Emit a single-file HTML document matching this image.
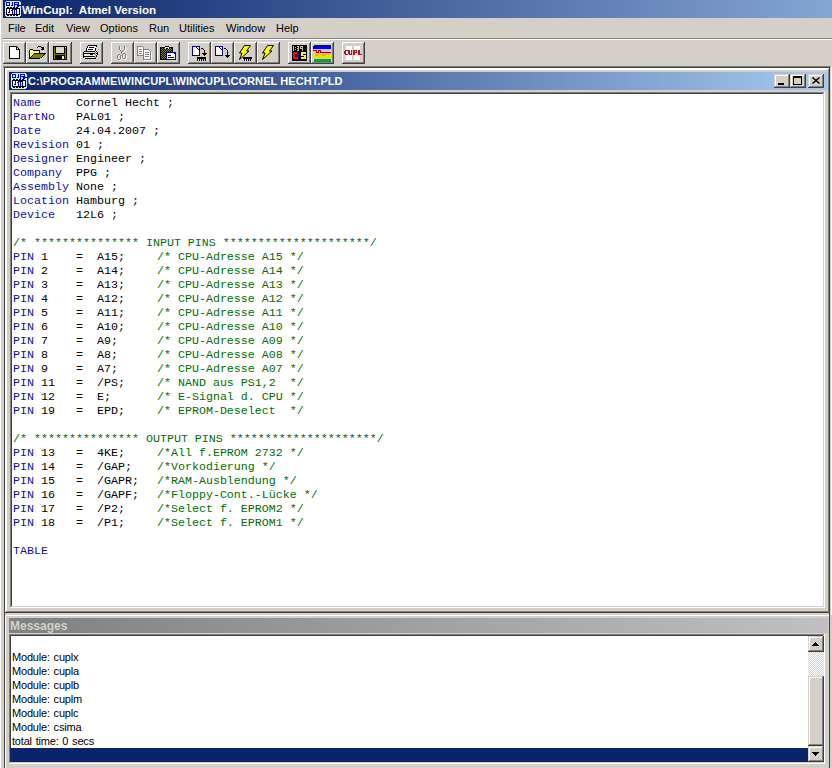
<!DOCTYPE html>
<html><head><meta charset="utf-8">
<style>
*{margin:0;padding:0;box-sizing:border-box}
html,body{width:832px;height:768px;overflow:hidden;background:#d4d0c8;position:relative;font-family:"Liberation Sans",sans-serif}
.a{position:absolute}
.menu{top:22px;font-size:11px;color:#000;white-space:nowrap}
.code{font-family:"Liberation Mono",monospace;font-size:11.667px;line-height:14px;white-space:pre;color:#000}
.k{color:#10109c}
.c{color:#007000}
.p{position:relative;left:4px}
.msg{font-size:11px;line-height:14px;white-space:pre;color:#000}
svg{position:absolute;left:0;top:0}
</style></head><body>
<div class="a" style="left:0;top:0;width:1px;height:768px;background:#fff"></div>
<div class="a" style="left:3px;top:0;width:829px;height:18px;background:linear-gradient(to right,#0a246a 0px,#a6caf0 1060px)"></div>
<div class="a" style="left:22px;top:3px;color:#fff;font-weight:bold;font-size:11.6px;white-space:nowrap">WinCupl:&nbsp; Atmel Version</div>
<div class="a menu" style="left:8px">File</div>
<div class="a menu" style="left:35px">Edit</div>
<div class="a menu" style="left:66px">View</div>
<div class="a menu" style="left:100px">Options</div>
<div class="a menu" style="left:149px">Run</div>
<div class="a menu" style="left:179px">Utilities</div>
<div class="a menu" style="left:226px">Window</div>
<div class="a menu" style="left:276px">Help</div>
<div class="a" style="left:3px;top:38px;width:829px;height:1px;background:#808080"></div>
<div class="a" style="left:3px;top:39px;width:829px;height:1px;background:#fff"></div>
<div class="a" style="left:3px;top:42px;width:23px;height:22px;background:#404040"></div><div class="a" style="left:3px;top:42px;width:22px;height:21px;background:#fff"></div><div class="a" style="left:4px;top:43px;width:21px;height:20px;background:#808080"></div><div class="a" style="left:4px;top:43px;width:20px;height:19px;background:#d4d0c8"></div><div class="a" style="left:26px;top:42px;width:23px;height:22px;background:#404040"></div><div class="a" style="left:26px;top:42px;width:22px;height:21px;background:#fff"></div><div class="a" style="left:27px;top:43px;width:21px;height:20px;background:#808080"></div><div class="a" style="left:27px;top:43px;width:20px;height:19px;background:#d4d0c8"></div><div class="a" style="left:49px;top:42px;width:23px;height:22px;background:#404040"></div><div class="a" style="left:49px;top:42px;width:22px;height:21px;background:#fff"></div><div class="a" style="left:50px;top:43px;width:21px;height:20px;background:#808080"></div><div class="a" style="left:50px;top:43px;width:20px;height:19px;background:#d4d0c8"></div><div class="a" style="left:80px;top:42px;width:23px;height:22px;background:#404040"></div><div class="a" style="left:80px;top:42px;width:22px;height:21px;background:#fff"></div><div class="a" style="left:81px;top:43px;width:21px;height:20px;background:#808080"></div><div class="a" style="left:81px;top:43px;width:20px;height:19px;background:#d4d0c8"></div><div class="a" style="left:111px;top:42px;width:23px;height:22px;background:#404040"></div><div class="a" style="left:111px;top:42px;width:22px;height:21px;background:#fff"></div><div class="a" style="left:112px;top:43px;width:21px;height:20px;background:#808080"></div><div class="a" style="left:112px;top:43px;width:20px;height:19px;background:#d4d0c8"></div><div class="a" style="left:134px;top:42px;width:23px;height:22px;background:#404040"></div><div class="a" style="left:134px;top:42px;width:22px;height:21px;background:#fff"></div><div class="a" style="left:135px;top:43px;width:21px;height:20px;background:#808080"></div><div class="a" style="left:135px;top:43px;width:20px;height:19px;background:#d4d0c8"></div><div class="a" style="left:157px;top:42px;width:23px;height:22px;background:#404040"></div><div class="a" style="left:157px;top:42px;width:22px;height:21px;background:#fff"></div><div class="a" style="left:158px;top:43px;width:21px;height:20px;background:#808080"></div><div class="a" style="left:158px;top:43px;width:20px;height:19px;background:#d4d0c8"></div><div class="a" style="left:188px;top:42px;width:23px;height:22px;background:#404040"></div><div class="a" style="left:188px;top:42px;width:22px;height:21px;background:#fff"></div><div class="a" style="left:189px;top:43px;width:21px;height:20px;background:#808080"></div><div class="a" style="left:189px;top:43px;width:20px;height:19px;background:#d4d0c8"></div><div class="a" style="left:211px;top:42px;width:23px;height:22px;background:#404040"></div><div class="a" style="left:211px;top:42px;width:22px;height:21px;background:#fff"></div><div class="a" style="left:212px;top:43px;width:21px;height:20px;background:#808080"></div><div class="a" style="left:212px;top:43px;width:20px;height:19px;background:#d4d0c8"></div><div class="a" style="left:234px;top:42px;width:23px;height:22px;background:#404040"></div><div class="a" style="left:234px;top:42px;width:22px;height:21px;background:#fff"></div><div class="a" style="left:235px;top:43px;width:21px;height:20px;background:#808080"></div><div class="a" style="left:235px;top:43px;width:20px;height:19px;background:#d4d0c8"></div><div class="a" style="left:257px;top:42px;width:23px;height:22px;background:#404040"></div><div class="a" style="left:257px;top:42px;width:22px;height:21px;background:#fff"></div><div class="a" style="left:258px;top:43px;width:21px;height:20px;background:#808080"></div><div class="a" style="left:258px;top:43px;width:20px;height:19px;background:#d4d0c8"></div><div class="a" style="left:288px;top:42px;width:23px;height:22px;background:#404040"></div><div class="a" style="left:288px;top:42px;width:22px;height:21px;background:#fff"></div><div class="a" style="left:289px;top:43px;width:21px;height:20px;background:#808080"></div><div class="a" style="left:289px;top:43px;width:20px;height:19px;background:#d4d0c8"></div><div class="a" style="left:311px;top:42px;width:23px;height:22px;background:#404040"></div><div class="a" style="left:311px;top:42px;width:22px;height:21px;background:#fff"></div><div class="a" style="left:312px;top:43px;width:21px;height:20px;background:#808080"></div><div class="a" style="left:312px;top:43px;width:20px;height:19px;background:#d4d0c8"></div><div class="a" style="left:342px;top:42px;width:23px;height:22px;background:#404040"></div><div class="a" style="left:342px;top:42px;width:22px;height:21px;background:#fff"></div><div class="a" style="left:343px;top:43px;width:21px;height:20px;background:#808080"></div><div class="a" style="left:343px;top:43px;width:20px;height:19px;background:#d4d0c8"></div>
<div class="a" style="left:3px;top:66px;width:829px;height:1px;background:#808080"></div>
<div class="a" style="left:4px;top:67px;width:828px;height:1px;background:#404040"></div>
<div class="a" style="left:4px;top:67px;width:1px;height:701px;background:#404040"></div>
<div class="a" style="left:830px;top:67px;width:1px;height:548px;background:#d4d0c8"></div>
<div class="a" style="left:831px;top:66px;width:1px;height:549px;background:#fff"></div>
<div class="a" style="left:5px;top:68px;width:825px;height:545px;background:#404040"></div><div class="a" style="left:5px;top:68px;width:824px;height:544px;background:#fff"></div><div class="a" style="left:6px;top:69px;width:823px;height:543px;background:#808080"></div><div class="a" style="left:6px;top:69px;width:822px;height:542px;background:#fff"></div><div class="a" style="left:7px;top:70px;width:821px;height:541px;background:#d4d0c8"></div>
<div class="a" style="left:9px;top:72px;width:819px;height:18px;background:linear-gradient(to right,#0a246a,#a6caf0)"></div>
<div class="a" style="left:28px;top:75px;color:#fff;font-weight:bold;font-size:11px;letter-spacing:0.07px;white-space:nowrap">C:\PROGRAMME\WINCUPL\WINCUPL\CORNEL HECHT.PLD</div>
<div class="a" style="left:774px;top:74px;width:16px;height:14px;background:#404040"></div><div class="a" style="left:774px;top:74px;width:15px;height:13px;background:#d4d0c8"></div><div class="a" style="left:775px;top:75px;width:14px;height:12px;background:#808080"></div><div class="a" style="left:775px;top:75px;width:13px;height:11px;background:#fff"></div><div class="a" style="left:776px;top:76px;width:12px;height:10px;background:#d4d0c8"></div><div class="a" style="left:790px;top:74px;width:16px;height:14px;background:#404040"></div><div class="a" style="left:790px;top:74px;width:15px;height:13px;background:#d4d0c8"></div><div class="a" style="left:791px;top:75px;width:14px;height:12px;background:#808080"></div><div class="a" style="left:791px;top:75px;width:13px;height:11px;background:#fff"></div><div class="a" style="left:792px;top:76px;width:12px;height:10px;background:#d4d0c8"></div><div class="a" style="left:808px;top:74px;width:16px;height:14px;background:#404040"></div><div class="a" style="left:808px;top:74px;width:15px;height:13px;background:#d4d0c8"></div><div class="a" style="left:809px;top:75px;width:14px;height:12px;background:#808080"></div><div class="a" style="left:809px;top:75px;width:13px;height:11px;background:#fff"></div><div class="a" style="left:810px;top:76px;width:12px;height:10px;background:#d4d0c8"></div>
<div class="a" style="left:10px;top:92px;width:815px;height:516px;background:#fff"></div><div class="a" style="left:10px;top:92px;width:814px;height:515px;background:#808080"></div><div class="a" style="left:11px;top:93px;width:813px;height:514px;background:#d4d0c8"></div><div class="a" style="left:11px;top:93px;width:812px;height:513px;background:#404040"></div><div class="a" style="left:12px;top:94px;width:811px;height:512px;background:#fff"></div>
<div class="a code" style="left:13px;top:96px"><span class="k">Name</span>     Cornel Hecht ;
<span class="k">PartNo</span>   PAL01 ;
<span class="k">Date</span>     24.04.2007 ;
<span class="k">Revision</span> 01 ;
<span class="k">Designer</span> Engineer ;
<span class="k">Company</span>  PPG ;
<span class="k">Assembly</span> None ;
<span class="k">Location</span> Hamburg ;
<span class="k">Device</span>   12L6 ;

<span class="c">/* *************** INPUT PINS *********************/</span>
<span class="k">PIN</span> 1    =  A15;    <span class="c p">/* CPU-Adresse A15 */</span>
<span class="k">PIN</span> 2    =  A14;    <span class="c p">/* CPU-Adresse A14 */</span>
<span class="k">PIN</span> 3    =  A13;    <span class="c p">/* CPU-Adresse A13 */</span>
<span class="k">PIN</span> 4    =  A12;    <span class="c p">/* CPU-Adresse A12 */</span>
<span class="k">PIN</span> 5    =  A11;    <span class="c p">/* CPU-Adresse A11 */</span>
<span class="k">PIN</span> 6    =  A10;    <span class="c p">/* CPU-Adresse A10 */</span>
<span class="k">PIN</span> 7    =  A9;     <span class="c p">/* CPU-Adresse A09 */</span>
<span class="k">PIN</span> 8    =  A8;     <span class="c p">/* CPU-Adresse A08 */</span>
<span class="k">PIN</span> 9    =  A7;     <span class="c p">/* CPU-Adresse A07 */</span>
<span class="k">PIN</span> 11   =  /PS;    <span class="c p">/* NAND aus PS1,2  */</span>
<span class="k">PIN</span> 12   =  E;      <span class="c p">/* E-Signal d. CPU */</span>
<span class="k">PIN</span> 19   =  EPD;    <span class="c p">/* EPROM-Deselect  */</span>

<span class="c">/* *************** OUTPUT PINS *********************/</span>
<span class="k">PIN</span> 13   =  4KE;    <span class="c p">/*All f.EPROM 2732 */</span>
<span class="k">PIN</span> 14   =  /GAP;   <span class="c p">/*Vorkodierung */</span>
<span class="k">PIN</span> 15   =  /GAPR;  <span class="c p">/*RAM-Ausblendung */</span>
<span class="k">PIN</span> 16   =  /GAPF;  <span class="c p">/*Floppy-Cont.-Lücke */</span>
<span class="k">PIN</span> 17   =  /P2;    <span class="c p">/*Select f. EPROM2 */</span>
<span class="k">PIN</span> 18   =  /P1;    <span class="c p">/*Select f. EPROM1 */</span>

<span class="k">TABLE</span></div>
<div class="a" style="left:5px;top:615px;width:825px;height:1px;background:#fff"></div>
<div class="a" style="left:5px;top:615px;width:1px;height:153px;background:#fff"></div>
<div class="a" style="left:9px;top:618px;width:819px;height:15px;background:linear-gradient(to right,#808080,#c0c0c0)"></div>
<div class="a" style="left:10px;top:619px;color:#d4d0c8;font-weight:bold;font-size:12px;white-space:nowrap">Messages</div>
<div class="a" style="left:9px;top:634px;width:816px;height:130px;background:#fff"></div><div class="a" style="left:9px;top:634px;width:815px;height:129px;background:#808080"></div><div class="a" style="left:10px;top:635px;width:814px;height:128px;background:#d4d0c8"></div><div class="a" style="left:10px;top:635px;width:813px;height:127px;background:#404040"></div><div class="a" style="left:11px;top:636px;width:812px;height:126px;background:#fff"></div>
<div class="a msg" style="left:12px;top:650px;letter-spacing:-0.2px;word-spacing:1px">Module: cuplx
Module: cupla
Module: cuplb
Module: cuplm
Module: cuplc
Module: csima
total time: 0 secs</div>
<div class="a" style="left:10px;top:748px;width:798px;height:14px;background:#0a246a"></div>
<div class="a" style="left:808px;top:652px;width:16px;height:24px;background:repeating-conic-gradient(#d4d0c8 0 25%,#fff 0 50%) 0 0/2px 2px"></div>
<div class="a" style="left:808px;top:636px;width:16px;height:16px;background:#404040"></div><div class="a" style="left:808px;top:636px;width:15px;height:15px;background:#d4d0c8"></div><div class="a" style="left:809px;top:637px;width:14px;height:14px;background:#808080"></div><div class="a" style="left:809px;top:637px;width:13px;height:13px;background:#fff"></div><div class="a" style="left:810px;top:638px;width:12px;height:12px;background:#d4d0c8"></div><div class="a" style="left:808px;top:676px;width:16px;height:70px;background:#404040"></div><div class="a" style="left:808px;top:676px;width:15px;height:69px;background:#d4d0c8"></div><div class="a" style="left:809px;top:677px;width:14px;height:68px;background:#808080"></div><div class="a" style="left:809px;top:677px;width:13px;height:67px;background:#fff"></div><div class="a" style="left:810px;top:678px;width:12px;height:66px;background:#d4d0c8"></div><div class="a" style="left:808px;top:746px;width:16px;height:16px;background:#404040"></div><div class="a" style="left:808px;top:746px;width:15px;height:15px;background:#d4d0c8"></div><div class="a" style="left:809px;top:747px;width:14px;height:14px;background:#808080"></div><div class="a" style="left:809px;top:747px;width:13px;height:13px;background:#fff"></div><div class="a" style="left:810px;top:748px;width:12px;height:12px;background:#d4d0c8"></div>
<div class="a" style="left:829px;top:612px;width:1px;height:156px;background:#404040"></div>
<svg width="832" height="768" shape-rendering="crispEdges">
<rect x="6" y="1" width="14" height="16" fill="#c8f0ff"/><rect x="5" y="2" width="16" height="14" fill="#c8f0ff"/><rect x="6" y="2" width="4" height="1" fill="#0000c0"/><rect x="6" y="2" width="1" height="4" fill="#0000c0"/><rect x="9" y="2" width="1" height="4" fill="#0000c0"/><rect x="6" y="5" width="4" height="1" fill="#0000c0"/><rect x="12" y="2" width="1" height="4" fill="#0000c0"/><rect x="11" y="5" width="2" height="1" fill="#0000c0"/><rect x="14" y="2" width="5" height="1" fill="#0000c0"/><rect x="14" y="2" width="1" height="5" fill="#0000c0"/><rect x="18" y="2" width="1" height="3" fill="#0000c0"/><rect x="14" y="4" width="5" height="1" fill="#0000c0"/><rect x="17" y="5" width="2" height="2" fill="#0000c0"/><rect x="18" y="5" width="3" height="1" fill="#0000c0"/><rect x="7" y="7" width="2" height="1" fill="#000"/><rect x="7" y="15" width="2" height="1" fill="#000"/><rect x="10" y="7" width="2" height="1" fill="#000"/><rect x="10" y="15" width="2" height="1" fill="#000"/><rect x="13" y="7" width="2" height="1" fill="#000"/><rect x="13" y="15" width="2" height="1" fill="#000"/><rect x="16" y="7" width="2" height="1" fill="#000"/><rect x="16" y="15" width="2" height="1" fill="#000"/><rect x="6" y="8" width="14" height="7" fill="#000"/><rect x="7" y="9" width="12" height="5" fill="#fff"/><rect x="9" y="9" width="1" height="3" fill="#0000c0"/><rect x="8" y="12" width="2" height="1" fill="#0000c0"/><rect x="11" y="10" width="2" height="1" fill="#0000c0"/><rect x="12" y="9" width="1" height="5" fill="#0000c0"/><rect x="13" y="9" width="3" height="1" fill="#0000c0"/><rect x="14" y="9" width="1" height="5" fill="#0000c0"/><rect x="16" y="9" width="1" height="5" fill="#0000c0"/><rect x="12" y="73" width="14" height="16" fill="#c8f0ff"/><rect x="11" y="74" width="16" height="14" fill="#c8f0ff"/><rect x="12" y="74" width="4" height="1" fill="#0000c0"/><rect x="12" y="74" width="1" height="4" fill="#0000c0"/><rect x="15" y="74" width="1" height="4" fill="#0000c0"/><rect x="12" y="77" width="4" height="1" fill="#0000c0"/><rect x="18" y="74" width="1" height="4" fill="#0000c0"/><rect x="17" y="77" width="2" height="1" fill="#0000c0"/><rect x="20" y="74" width="5" height="1" fill="#0000c0"/><rect x="20" y="74" width="1" height="5" fill="#0000c0"/><rect x="24" y="74" width="1" height="3" fill="#0000c0"/><rect x="20" y="76" width="5" height="1" fill="#0000c0"/><rect x="23" y="77" width="2" height="2" fill="#0000c0"/><rect x="24" y="77" width="3" height="1" fill="#0000c0"/><rect x="13" y="79" width="2" height="1" fill="#000"/><rect x="13" y="87" width="2" height="1" fill="#000"/><rect x="16" y="79" width="2" height="1" fill="#000"/><rect x="16" y="87" width="2" height="1" fill="#000"/><rect x="19" y="79" width="2" height="1" fill="#000"/><rect x="19" y="87" width="2" height="1" fill="#000"/><rect x="22" y="79" width="2" height="1" fill="#000"/><rect x="22" y="87" width="2" height="1" fill="#000"/><rect x="12" y="80" width="14" height="7" fill="#000"/><rect x="13" y="81" width="12" height="5" fill="#fff"/><rect x="15" y="81" width="1" height="3" fill="#0000c0"/><rect x="14" y="84" width="2" height="1" fill="#0000c0"/><rect x="17" y="82" width="2" height="1" fill="#0000c0"/><rect x="18" y="81" width="1" height="5" fill="#0000c0"/><rect x="19" y="81" width="3" height="1" fill="#0000c0"/><rect x="20" y="81" width="1" height="5" fill="#0000c0"/><rect x="22" y="81" width="1" height="5" fill="#0000c0"/>
<rect x="9" y="46" width="8" height="1" fill="#000"/><rect x="9" y="46" width="1" height="13" fill="#000"/><rect x="9" y="58" width="11" height="1" fill="#000"/><rect x="19" y="49" width="1" height="10" fill="#000"/><rect x="17" y="47" width="1" height="1" fill="#000"/><rect x="18" y="48" width="1" height="1" fill="#000"/><rect x="10" y="47" width="6" height="11" fill="#fff"/><rect x="10" y="50" width="9" height="8" fill="#fff"/><rect x="16" y="47" width="1" height="2" fill="#000"/><rect x="16" y="49" width="3" height="1" fill="#000"/><rect x="17" y="48" width="1" height="1" fill="#fff"/><rect x="29" y="50" width="1" height="9" fill="#000"/><rect x="30" y="49" width="3" height="1" fill="#000"/><rect x="33" y="50" width="6" height="1" fill="#000"/><rect x="39" y="50" width="1" height="3" fill="#000"/><rect x="30" y="50" width="3" height="8" fill="#ffff80"/><rect x="33" y="51" width="6" height="2" fill="#ffff80"/><rect x="30" y="53" width="3" height="4" fill="#ffff80"/><rect x="34" y="53" width="12" height="1" fill="#000"/><rect x="29" y="58" width="11" height="1" fill="#000"/><polygon points="34,54 45,54 40,58 31,58" fill="#808000"/><rect x="33" y="54" width="1" height="1" fill="#000"/><rect x="32" y="55" width="1" height="1" fill="#000"/><rect x="31" y="56" width="1" height="1" fill="#000"/><rect x="30" y="57" width="1" height="1" fill="#000"/><rect x="44" y="54" width="1" height="1" fill="#000"/><rect x="43" y="55" width="1" height="1" fill="#000"/><rect x="42" y="56" width="1" height="1" fill="#000"/><rect x="41" y="57" width="1" height="1" fill="#000"/><rect x="37" y="47" width="1" height="1" fill="#000"/><rect x="38" y="46" width="3" height="1" fill="#000"/><rect x="41" y="47" width="1" height="1" fill="#000"/><rect x="42" y="47" width="2" height="3" fill="#000"/><rect x="41" y="49" width="1" height="1" fill="#000"/><rect x="53" y="46" width="14" height="14" fill="#000"/><rect x="54" y="47" width="12" height="12" fill="#808000"/><rect x="55" y="47" width="10" height="7" fill="#000"/><rect x="56" y="47" width="8" height="6" fill="#d8d8d0"/><rect x="55" y="55" width="10" height="4" fill="#000"/><rect x="62" y="56" width="2" height="3" fill="#e8e8e0"/><rect x="65" y="47" width="1" height="1" fill="#fff"/><rect x="88" y="45" width="9" height="1" fill="#000"/><rect x="87" y="46" width="1" height="2" fill="#000"/><rect x="86" y="48" width="1" height="3" fill="#000"/><rect x="96" y="46" width="1" height="1" fill="#000"/><rect x="95" y="47" width="1" height="3" fill="#000"/><rect x="88" y="46" width="8" height="2" fill="#fff"/><rect x="87" y="48" width="8" height="3" fill="#fff"/><rect x="89" y="47" width="5" height="1" fill="#000"/><rect x="88" y="49" width="5" height="1" fill="#000"/><rect x="84" y="51" width="11" height="1" fill="#000"/><rect x="83" y="52" width="1" height="6" fill="#000"/><rect x="84" y="52" width="10" height="1" fill="#f0f0f0"/><rect x="84" y="53" width="11" height="1" fill="#000"/><rect x="84" y="54" width="11" height="2" fill="#f0f0c8"/><rect x="90" y="54" width="3" height="1" fill="#000"/><rect x="84" y="56" width="11" height="1" fill="#000"/><rect x="85" y="57" width="9" height="1" fill="#f0f0f0"/><rect x="85" y="58" width="11" height="1" fill="#000"/><rect x="95" y="50" width="1" height="1" fill="#000"/><rect x="96" y="51" width="1" height="1" fill="#000"/><rect x="97" y="52" width="1" height="3" fill="#000"/><rect x="95" y="52" width="1" height="1" fill="#808080"/><rect x="96" y="53" width="1" height="1" fill="#000"/><rect x="95" y="54" width="1" height="1" fill="#808080"/><rect x="96" y="55" width="1" height="2" fill="#000"/><rect x="95" y="57" width="1" height="1" fill="#808080"/><rect x="120" y="47" width="1" height="4" fill="#fff"/><rect x="125" y="47" width="1" height="4" fill="#fff"/><rect x="121" y="51" width="1" height="1" fill="#fff"/><rect x="124" y="51" width="1" height="1" fill="#fff"/><rect x="122" y="52" width="2" height="1" fill="#fff"/><rect x="122" y="53" width="1" height="2" fill="#fff"/><rect x="119" y="55" width="2" height="1" fill="#fff"/><rect x="118" y="56" width="1" height="4" fill="#fff"/><rect x="121" y="56" width="1" height="4" fill="#fff"/><rect x="119" y="60" width="2" height="1" fill="#fff"/><rect x="124" y="54" width="2" height="1" fill="#fff"/><rect x="123" y="55" width="1" height="4" fill="#fff"/><rect x="126" y="55" width="1" height="4" fill="#fff"/><rect x="124" y="59" width="2" height="1" fill="#fff"/><rect x="119" y="46" width="1" height="4" fill="#808080"/><rect x="124" y="46" width="1" height="4" fill="#808080"/><rect x="120" y="50" width="1" height="1" fill="#808080"/><rect x="123" y="50" width="1" height="1" fill="#808080"/><rect x="121" y="51" width="2" height="1" fill="#808080"/><rect x="121" y="52" width="1" height="2" fill="#808080"/><rect x="118" y="54" width="2" height="1" fill="#808080"/><rect x="117" y="55" width="1" height="4" fill="#808080"/><rect x="120" y="55" width="1" height="4" fill="#808080"/><rect x="118" y="59" width="2" height="1" fill="#808080"/><rect x="123" y="53" width="2" height="1" fill="#808080"/><rect x="122" y="54" width="1" height="4" fill="#808080"/><rect x="125" y="54" width="1" height="4" fill="#808080"/><rect x="123" y="58" width="2" height="1" fill="#808080"/><rect x="138" y="47" width="5" height="8" fill="#fff"/><rect x="144" y="50" width="6" height="9" fill="#fff"/><rect x="137" y="46" width="6" height="1" fill="#808080"/><rect x="137" y="46" width="1" height="9" fill="#808080"/><rect x="137" y="55" width="6" height="1" fill="#808080"/><rect x="143" y="47" width="1" height="2" fill="#808080"/><rect x="143" y="49" width="6" height="1" fill="#808080"/><rect x="143" y="49" width="1" height="10" fill="#808080"/><rect x="143" y="59" width="8" height="1" fill="#808080"/><rect x="150" y="51" width="1" height="8" fill="#808080"/><rect x="149" y="50" width="1" height="1" fill="#808080"/><rect x="139" y="49" width="3" height="1" fill="#808080"/><rect x="139" y="51" width="3" height="1" fill="#808080"/><rect x="139" y="53" width="3" height="1" fill="#808080"/><rect x="145" y="52" width="4" height="1" fill="#808080"/><rect x="145" y="54" width="4" height="1" fill="#808080"/><rect x="145" y="56" width="4" height="1" fill="#808080"/><rect x="151" y="52" width="1" height="8" fill="#fff"/><rect x="144" y="60" width="8" height="1" fill="#fff"/><rect x="160" y="47" width="13" height="13" fill="#000"/><rect x="165" y="46" width="4" height="1" fill="#000"/><rect x="162" y="48" width="1" height="1" fill="#808040"/><rect x="164" y="48" width="1" height="1" fill="#808040"/><rect x="166" y="48" width="1" height="1" fill="#808040"/><rect x="168" y="48" width="1" height="1" fill="#808040"/><rect x="170" y="48" width="1" height="1" fill="#808040"/><rect x="161" y="49" width="1" height="1" fill="#808040"/><rect x="163" y="49" width="1" height="1" fill="#808040"/><rect x="165" y="49" width="1" height="1" fill="#808040"/><rect x="167" y="49" width="1" height="1" fill="#808040"/><rect x="169" y="49" width="1" height="1" fill="#808040"/><rect x="171" y="49" width="1" height="1" fill="#808040"/><rect x="162" y="50" width="1" height="1" fill="#808040"/><rect x="164" y="50" width="1" height="1" fill="#808040"/><rect x="166" y="50" width="1" height="1" fill="#808040"/><rect x="168" y="50" width="1" height="1" fill="#808040"/><rect x="170" y="50" width="1" height="1" fill="#808040"/><rect x="161" y="51" width="1" height="1" fill="#808040"/><rect x="163" y="51" width="1" height="1" fill="#808040"/><rect x="165" y="51" width="1" height="1" fill="#808040"/><rect x="167" y="51" width="1" height="1" fill="#808040"/><rect x="169" y="51" width="1" height="1" fill="#808040"/><rect x="171" y="51" width="1" height="1" fill="#808040"/><rect x="162" y="52" width="1" height="1" fill="#808040"/><rect x="164" y="52" width="1" height="1" fill="#808040"/><rect x="166" y="52" width="1" height="1" fill="#808040"/><rect x="168" y="52" width="1" height="1" fill="#808040"/><rect x="170" y="52" width="1" height="1" fill="#808040"/><rect x="161" y="53" width="1" height="1" fill="#808040"/><rect x="163" y="53" width="1" height="1" fill="#808040"/><rect x="165" y="53" width="1" height="1" fill="#808040"/><rect x="167" y="53" width="1" height="1" fill="#808040"/><rect x="169" y="53" width="1" height="1" fill="#808040"/><rect x="171" y="53" width="1" height="1" fill="#808040"/><rect x="162" y="54" width="1" height="1" fill="#808040"/><rect x="164" y="54" width="1" height="1" fill="#808040"/><rect x="166" y="54" width="1" height="1" fill="#808040"/><rect x="168" y="54" width="1" height="1" fill="#808040"/><rect x="170" y="54" width="1" height="1" fill="#808040"/><rect x="161" y="55" width="1" height="1" fill="#808040"/><rect x="163" y="55" width="1" height="1" fill="#808040"/><rect x="165" y="55" width="1" height="1" fill="#808040"/><rect x="167" y="55" width="1" height="1" fill="#808040"/><rect x="169" y="55" width="1" height="1" fill="#808040"/><rect x="171" y="55" width="1" height="1" fill="#808040"/><rect x="162" y="56" width="1" height="1" fill="#808040"/><rect x="164" y="56" width="1" height="1" fill="#808040"/><rect x="166" y="56" width="1" height="1" fill="#808040"/><rect x="168" y="56" width="1" height="1" fill="#808040"/><rect x="170" y="56" width="1" height="1" fill="#808040"/><rect x="161" y="57" width="1" height="1" fill="#808040"/><rect x="163" y="57" width="1" height="1" fill="#808040"/><rect x="165" y="57" width="1" height="1" fill="#808040"/><rect x="167" y="57" width="1" height="1" fill="#808040"/><rect x="169" y="57" width="1" height="1" fill="#808040"/><rect x="171" y="57" width="1" height="1" fill="#808040"/><rect x="162" y="58" width="1" height="1" fill="#808040"/><rect x="164" y="58" width="1" height="1" fill="#808040"/><rect x="166" y="58" width="1" height="1" fill="#808040"/><rect x="168" y="58" width="1" height="1" fill="#808040"/><rect x="170" y="58" width="1" height="1" fill="#808040"/><rect x="165" y="47" width="4" height="2" fill="#f0f0c0"/><rect x="166" y="48" width="2" height="1" fill="#000"/><rect x="166" y="52" width="10" height="8" fill="#000080"/><rect x="167" y="53" width="7" height="6" fill="#fff"/><rect x="174" y="54" width="1" height="5" fill="#fff"/><rect x="168" y="55" width="3" height="1" fill="#000080"/><rect x="168" y="57" width="6" height="1" fill="#000080"/><rect x="192" y="46" width="8" height="10" fill="#000080"/><rect x="193" y="47" width="6" height="8" fill="#fff"/><rect x="196" y="47" width="1" height="1" fill="#000"/><rect x="197" y="48" width="1" height="1" fill="#000"/><rect x="198" y="49" width="1" height="1" fill="#000"/><rect x="201" y="48" width="2" height="1" fill="#000"/><rect x="203" y="49" width="1" height="1" fill="#000"/><rect x="204" y="50" width="1" height="6" fill="#000"/><rect x="202" y="53" width="5" height="1" fill="#000"/><rect x="203" y="54" width="3" height="1" fill="#000"/><rect x="197" y="57" width="9" height="2" fill="#000"/><rect x="197" y="59" width="1" height="2" fill="#000"/><rect x="199" y="59" width="1" height="2" fill="#000"/><rect x="201" y="59" width="1" height="2" fill="#000"/><rect x="203" y="59" width="1" height="2" fill="#000"/><rect x="205" y="59" width="1" height="2" fill="#000"/><rect x="215" y="46" width="8" height="10" fill="#000080"/><rect x="216" y="47" width="6" height="8" fill="#fff"/><rect x="219" y="47" width="1" height="1" fill="#000"/><rect x="220" y="48" width="1" height="1" fill="#000"/><rect x="221" y="49" width="1" height="1" fill="#000"/><rect x="224" y="48" width="2" height="1" fill="#000"/><rect x="226" y="49" width="1" height="1" fill="#000"/><rect x="227" y="50" width="1" height="7" fill="#000"/><rect x="225" y="55" width="5" height="1" fill="#000"/><rect x="226" y="56" width="3" height="1" fill="#000"/><rect x="227" y="57" width="1" height="1" fill="#000"/><g shape-rendering="auto"><polygon points="244.5,45.5 250.5,45.5 246.5,51 249,51 239.5,59.5 242,53 239.5,53" fill="#ffff00" stroke="#000" stroke-width="1"/><polygon points="267.5,45.5 273.5,45.5 269.5,51 272,51 262.5,59.5 265,53 262.5,53" fill="#ffff00" stroke="#000" stroke-width="1"/></g><rect x="243" y="57" width="9" height="2" fill="#000"/><rect x="244" y="59" width="1" height="2" fill="#000"/><rect x="246" y="59" width="1" height="2" fill="#000"/><rect x="248" y="59" width="1" height="2" fill="#000"/><rect x="250" y="59" width="1" height="2" fill="#000"/><rect x="292" y="45" width="15" height="16" fill="#000"/><rect x="293" y="46" width="1" height="5" fill="#b8c8b8"/><rect x="295" y="47" width="1" height="1" fill="#b8c8b8"/><rect x="295" y="49" width="1" height="1" fill="#b8c8b8"/><rect x="297" y="46" width="2" height="1" fill="#b8c8b8"/><rect x="298" y="46" width="1" height="5" fill="#b8c8b8"/><rect x="297" y="48" width="2" height="1" fill="#b8c8b8"/><rect x="297" y="50" width="2" height="1" fill="#b8c8b8"/><rect x="300" y="46" width="3" height="1" fill="#b8c8b8"/><rect x="300" y="46" width="1" height="3" fill="#b8c8b8"/><rect x="302" y="46" width="1" height="5" fill="#b8c8b8"/><rect x="300" y="48" width="3" height="1" fill="#b8c8b8"/><rect x="293" y="52" width="2" height="7" fill="#e01010"/><rect x="293" y="52" width="4" height="2" fill="#e01010"/><rect x="293" y="57" width="5" height="2" fill="#e01010"/><rect x="296" y="54" width="3" height="3" fill="#400060"/><rect x="301" y="52" width="5" height="2" fill="#f0f040"/><rect x="301" y="52" width="2" height="3" fill="#f0f040"/><rect x="301" y="55" width="5" height="1" fill="#f0f040"/><rect x="304" y="55" width="2" height="4" fill="#f0f040"/><rect x="301" y="57" width="5" height="2" fill="#f0f040"/><rect x="314" y="45" width="17" height="4" fill="#0000e0"/><rect x="313" y="46" width="1" height="3" fill="#000080"/><rect x="313" y="50" width="4" height="1" fill="#c00000"/><rect x="316" y="50" width="1" height="3" fill="#c00000"/><rect x="316" y="52" width="3" height="1" fill="#c00000"/><rect x="318" y="50" width="1" height="3" fill="#c00000"/><rect x="318" y="50" width="3" height="1" fill="#c00000"/><rect x="320" y="50" width="1" height="3" fill="#c00000"/><rect x="320" y="52" width="11" height="1" fill="#a00000"/><rect x="314" y="53" width="17" height="1" fill="#ffc080"/><rect x="314" y="54" width="17" height="4" fill="#e8e000"/><rect x="315" y="54" width="3" height="2" fill="#f0b000"/><rect x="322" y="54" width="3" height="2" fill="#f0b000"/><rect x="314" y="58" width="17" height="1" fill="#a0f0a0"/><rect x="314" y="59" width="17" height="3" fill="#10a030"/><rect x="346" y="46" width="6" height="14" fill="#fff"/><rect x="354" y="46" width="6" height="14" fill="#fff"/><rect x="345" y="50" width="3" height="1" fill="#b01020"/><rect x="344" y="51" width="2" height="3" fill="#b01020"/><rect x="345" y="54" width="3" height="1" fill="#b01020"/><rect x="348" y="50" width="2" height="4" fill="#b01020"/><rect x="351" y="50" width="1" height="4" fill="#b01020"/><rect x="349" y="54" width="3" height="1" fill="#b01020"/><rect x="353" y="50" width="2" height="5" fill="#b01020"/><rect x="355" y="50" width="2" height="1" fill="#b01020"/><rect x="356" y="51" width="1" height="1" fill="#b01020"/><rect x="355" y="52" width="2" height="1" fill="#b01020"/><rect x="358" y="50" width="2" height="5" fill="#b01020"/><rect x="360" y="54" width="2" height="1" fill="#b01020"/>
<rect x="778" y="83" width="6" height="2" fill="#000"/>
<rect x="793" y="76" width="9" height="9" fill="#000"/><rect x="794" y="78" width="7" height="6" fill="#d4d0c8"/>
<g shape-rendering="auto"><path d="M812.5 77.5 L819.5 83.5 M819.5 77.5 L812.5 83.5" stroke="#000" stroke-width="1.6"/></g>
<rect x="815" y="642" width="1" height="1" fill="#000"/><rect x="814" y="643" width="3" height="1" fill="#000"/><rect x="813" y="644" width="5" height="1" fill="#000"/><rect x="812" y="645" width="7" height="1" fill="#000"/>
<rect x="815" y="755" width="1" height="1" fill="#000"/><rect x="814" y="754" width="3" height="1" fill="#000"/><rect x="813" y="753" width="5" height="1" fill="#000"/><rect x="812" y="752" width="7" height="1" fill="#000"/>
</svg>
</body></html>
